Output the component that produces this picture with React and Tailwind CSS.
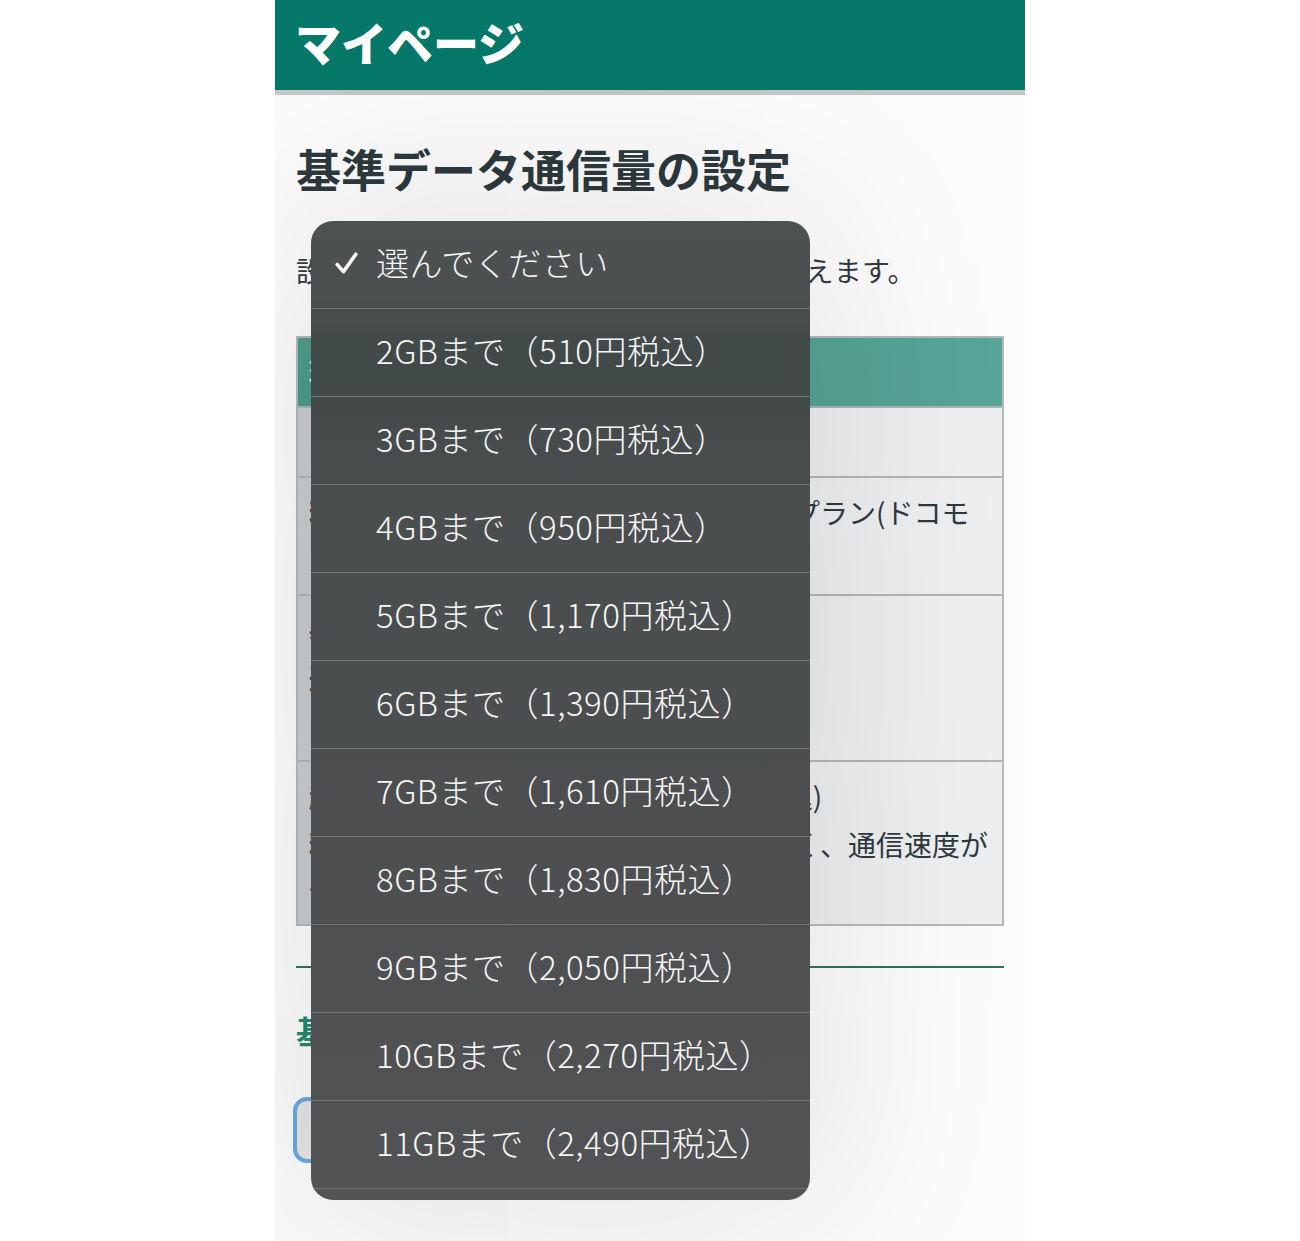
import React from "react";

const options = [
  ["2GB", "510"],
  ["3GB", "730"],
  ["4GB", "950"],
  ["5GB", "1,170"],
  ["6GB", "1,390"],
  ["7GB", "1,610"],
  ["8GB", "1,830"],
  ["9GB", "2,050"],
  ["10GB", "2,270"],
  ["11GB", "2,490"],
  ["12GB", "2,710"],
];

const font = { fontFamily: '"Noto Sans CJK JP", "Noto Sans", sans-serif' };

function Row({ h, th, td }) {
  return (
    <div className={`flex border-t-2 border-[#aeb3b6] ${h}`}>
      <div className="w-[200px] shrink-0 bg-[#c7cbce] pl-[11px] pt-[10px] text-[28px] leading-[48px] font-bold text-[#333b3f] whitespace-nowrap">
        {th}
      </div>
      <div className="flex-1 bg-[#eceef0] pl-[14px] pt-[10px] text-[28px] leading-[48px] text-[#2f3a3f] whitespace-nowrap">
        {td}
      </div>
    </div>
  );
}

export default function App() {
  return (
    <div className="min-h-[1241px] bg-white flex justify-center" style={font}>
      <div className="relative w-[750px] h-[1241px] overflow-hidden bg-[#fbfbfb]">
        <header className="h-[95px] bg-[#05786a] border-b-[5px] border-[#c6c6c6] flex items-center pb-[8px] px-[20px]">
          <h1 className="text-[46px] leading-none font-black text-white">マイページ</h1>
        </header>

        <main className="px-[21px]">
          <h2 className="mt-[41px] text-[45px] leading-[66px] font-bold text-[#2e393d] whitespace-nowrap">
            基準データ通信量の設定
          </h2>
          <p className="mt-[48px] text-[28px] leading-[40px] text-[#333b3f] whitespace-nowrap tracking-[0.3px]">
            設定の基準データ通信量は翌月に切り替えます。
          </p>

          <div className="mt-[46px] border-2 border-[#b3b8bb]">
            <div className="h-[68px] bg-[linear-gradient(90deg,#4e9a8c,#58a498)] pl-[11px] flex items-center text-[28px] font-bold text-white whitespace-nowrap">
              現在のご契約内容
            </div>
            <Row h="h-[70px]" th="ご利用回線" td="080-1234-5678" />
            <Row
              h="h-[118px]"
              th={<>料金プラン</>}
              td={
                <>
                  通信量は現在ご契約のプラン(ドコモ
                  <br />
                  回線)と同じです
                </>
              }
            />
            <Row
              h="h-[166px]"
              th={
                <>
                  基準データ
                  <br />
                  通信量
                  <br />
                  について
                </>
              }
              td={
                <>
                  未設定
                  <br />
                  (毎月1日に
                  <br />
                  リセット)
                </>
              }
            />
            <Row
              h="h-[164px]"
              th={
                <>
                  超過時の
                  <br />
                  料金
                  <br />
                  注意事項
                </>
              }
              td={
                <>
                  1GBあたり1,100円(税込)
                  <br />
                  当月の通信利用量が多く、通信速度が
                  <br />
                  制限されます。
                </>
              }
            />
          </div>

          <div className="mt-[40px] h-[2px] bg-[#2f6e62]" />

          <h3 className="mt-[38px] text-[32px] leading-[48px] font-bold text-[#1f8a6c] whitespace-nowrap">
            基準データ通信量
          </h3>

          <div className="mt-[43px] -ml-[3px] w-[420px] h-[66px] rounded-[14px] border-4 border-[#6ca7e1] bg-[#e3e4e4]" />
        </main>

        <div className="absolute left-[36px] top-[221px] w-[499px] h-[979px] rounded-[22px] overflow-hidden shadow-[0_0_200px_rgba(0,0,0,0.13)] bg-[linear-gradient(180deg,#4d5151_0%,#4a4f4f_8%,#414a49_13%,#434b4a_19%,#4a4e4e_28%,#4c4e4f_60%,#515354_100%)] text-[#f6f6f6] font-light">
          <div className="h-[87px] flex items-center pl-[24px] pb-[4px]">
            <svg width="23" height="22" viewBox="0 0 23 22" className="mr-[18px]">
              <path
                d="M2.2 12.5 L8.5 19.6 L20.8 2.2"
                fill="none"
                stroke="#f6f6f6"
                strokeWidth="3.6"
                strokeLinecap="round"
                strokeLinejoin="round"
              />
            </svg>
            <span className="text-[33px] leading-none tracking-[0.5px]">選んでください</span>
          </div>
          {options.map(([gb, price]) => (
            <div
              key={gb}
              className="h-[88px] border-t border-[#6f7373] flex items-center pl-[65px] pb-[4px] text-[33px] leading-none tracking-[0.5px] whitespace-nowrap"
            >
              {gb}まで（{price}円税込）
            </div>
          ))}
        </div>
      </div>
    </div>
  );
}
